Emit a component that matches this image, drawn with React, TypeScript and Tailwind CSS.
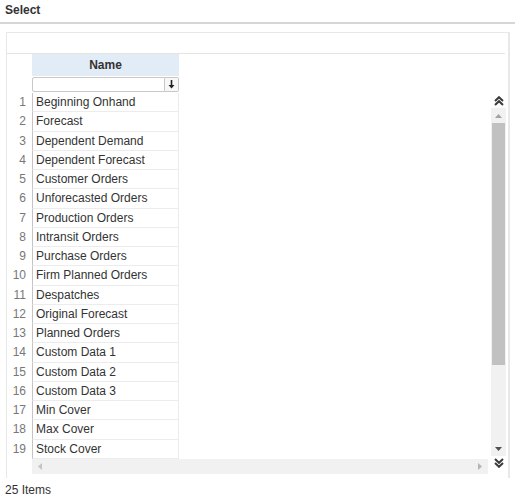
import React from 'react';

const rows = [
  'Beginning Onhand',
  'Forecast',
  'Dependent Demand',
  'Dependent Forecast',
  'Customer Orders',
  'Unforecasted Orders',
  'Production Orders',
  'Intransit Orders',
  'Purchase Orders',
  'Firm Planned Orders',
  'Despatches',
  'Original Forecast',
  'Planned Orders',
  'Custom Data 1',
  'Custom Data 2',
  'Custom Data 3',
  'Min Cover',
  'Max Cover',
  'Stock Cover',
];

const DoubleChevron = ({ up }: { up?: boolean }) => (
  <svg width="10" height="10" viewBox="0 0 10 10" className={up ? '' : 'rotate-180'}>
    <path d="M1 5 L5 1.2 L9 5" fill="none" stroke="#3a3a3a" strokeWidth="2" />
    <path d="M1 9 L5 5.2 L9 9" fill="none" stroke="#3a3a3a" strokeWidth="2" />
  </svg>
);

export default function App() {
  return (
    <div className="w-[517px] h-[500px] bg-white text-[12px] text-[#333] font-['Liberation_Sans',Arial,sans-serif] overflow-hidden">
      {/* title */}
      <div className="h-[24px] mr-[2px] border-b-2 border-[#d6d6d6] pl-[5px] pt-[3px] font-bold leading-[14px]">Select</div>

      {/* grid box */}
      <div className="ml-[6px] mr-[7px] mt-[8px] h-[446px] border border-[#e8e8e8] border-r-2 border-b-0">
        <div className="h-[21px] mr-[3px] border-b border-[#e4e4e4]" />

        <div className="flex">
          <div className="w-[484px]">
            {/* header */}
            <div className="flex h-[22px]">
              <div className="w-[25px]" />
              <div className="w-[147px] bg-[#e2ecf7] font-bold flex items-center justify-center">Name</div>
            </div>
            {/* filter */}
            <div className="flex h-[17px] pt-[1px]">
              <div className="w-[25px]" />
              <div className="w-[147px] flex">
                <div className="flex-1 h-[15px] border border-[#c8c8c8] rounded-l-[2px] bg-white" />
                <div className="w-[14px] h-[15px] border border-l-0 border-[#c8c8c8] rounded-r-[2px] bg-[#f7f7f7] flex items-center justify-center">
                  <svg width="7" height="9" viewBox="0 0 7 9">
                    <path d="M3.5 0 V7" stroke="#222" strokeWidth="1.6" />
                    <path d="M0.5 5 L3.5 8.5 L6.5 5 Z" fill="#222" />
                  </svg>
                </div>
              </div>
            </div>
            {/* rows */}
            {rows.map((r, i) => (
              <div key={r} className="flex h-[19.25px]">
                <div className="w-[25px] pr-[6px] text-right text-[#777] leading-[19px]">{i + 1}</div>
                <div className="w-[147px] border-l border-l-[#c4c4c4] border-b border-b-[#ececec] border-r border-r-[#ececec] pl-[3px] leading-[18px] whitespace-nowrap">
                  {r}
                </div>
              </div>
            ))}
            {/* horizontal scrollbar */}
            <div className="flex">
              <div className="w-[25px]" />
              <div className="w-[456px] h-[15px] bg-[#f1f1f1] flex items-center justify-between px-[6px]">
                <svg width="4" height="7" viewBox="0 0 4 7"><path d="M4 0 L0 3.5 L4 7 Z" fill="#c4c4c4" /></svg>
                <svg width="4" height="7" viewBox="0 0 4 7"><path d="M0 0 L4 3.5 L0 7 Z" fill="#b4b4b4" /></svg>
              </div>
            </div>
          </div>

          {/* vertical scroll column */}
          <div className="w-[15px] flex flex-col">
            <div className="h-[40px]" />
            <div className="h-[14px] flex items-center justify-center">
              <DoubleChevron up />
            </div>
            <div className="h-[348px] bg-[#f1f1f1] flex flex-col">
              <div className="h-[15px] flex items-center justify-center">
                <svg width="7" height="4" viewBox="0 0 7 4"><path d="M0 4 L3.5 0 L7 4 Z" fill="#a3a3a3" /></svg>
              </div>
              <div className="h-[242px] mx-[1px] bg-[#c1c1c1]" />
              <div className="flex-1" />
              <div className="h-[15px] flex items-center justify-center">
                <svg width="7" height="4" viewBox="0 0 7 4"><path d="M0 0 L3.5 4 L7 0 Z" fill="#505050" /></svg>
              </div>
            </div>
            <div className="h-[14px] flex items-center justify-center">
              <DoubleChevron />
            </div>
          </div>
        </div>
      </div>

      <div className="pl-[5px] pt-[5px] leading-[14px]">25 Items</div>
    </div>
  );
}
